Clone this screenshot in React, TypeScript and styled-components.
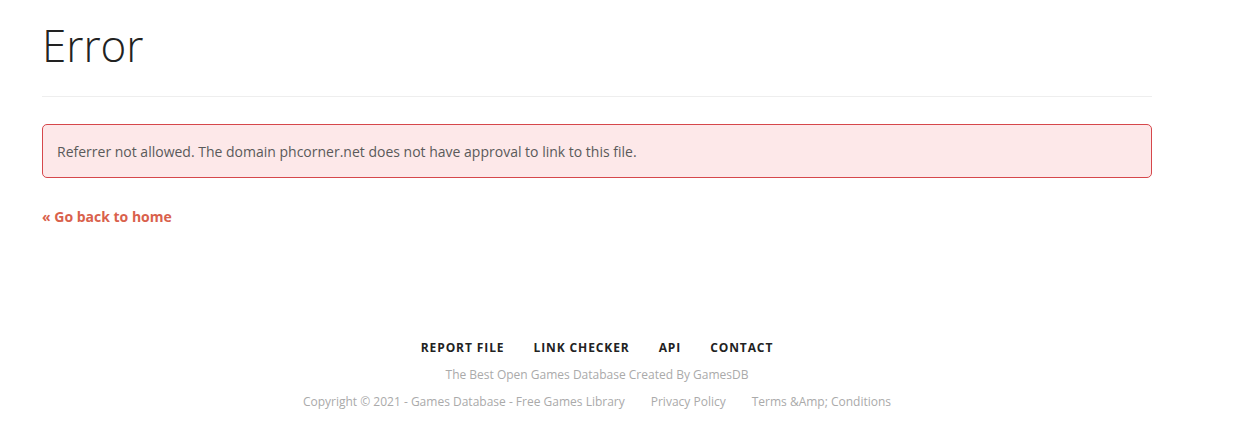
import styled, { createGlobalStyle } from "styled-components";

const Global = createGlobalStyle`
    body {
        margin: 0;
        background: #ffffff;
        font-family: 'Open Sans', 'Liberation Sans', sans-serif;
    }
`

const Page = styled.div`
    width: 1110px;
    padding: 0 42px;
`

const Title = styled.h1`
    margin: 0;
    padding-top: 17px;
    font-weight: 300;
    font-size: 44px;
    line-height: 56px;
    color: #222;
`

const Divider = styled.hr`
    margin: 23px 0 27px;
    border: 0;
    border-top: 1px solid #eeeeee;
`

const Alert = styled.div`
    box-sizing: border-box;
    height: 54px;
    display: flex;
    align-items: center;
    padding: 0 14px;
    background: #fde8e9;
    border: 1px solid #d6474b;
    border-radius: 5px;
    font-size: 14px;
    color: #5a5a5a;
`

const BackLink = styled.a`
    display: inline-block;
    margin-top: 29px;
    font-size: 14px;
    font-weight: 700;
    color: #d9614c;
    text-decoration: none;
`

const Footer = styled.footer`
    margin-top: 112px;
    display: flex;
    flex-direction: column;
    align-items: center;
`

const Nav = styled.nav`
    display: flex;
    gap: 29px;
`

const NavItem = styled.a`
    font-size: 12px;
    font-weight: 700;
    letter-spacing: 0.9px;
    color: #222;
    text-decoration: none;
    line-height: 18px;
`

const Tagline = styled.p`
    margin: 9px 0 0;
    font-size: 12px;
    line-height: 18px;
    color: #aaa;
`

const Bottom = styled.div`
    margin-top: 9px;
    display: flex;
    gap: 26px;
    font-size: 12px;
    line-height: 18px;
    color: #aaa;
`

export default function App() {
    return (
        <Page>
            <Global />
            <Title>Error</Title>
            <Divider />
            <Alert>Referrer not allowed. The domain phcorner.net does not have approval to link to this file.</Alert>
            <BackLink href="#">« Go back to home</BackLink>
            <Footer>
                <Nav>
                    <NavItem href="#">REPORT FILE</NavItem>
                    <NavItem href="#">LINK CHECKER</NavItem>
                    <NavItem href="#">API</NavItem>
                    <NavItem href="#">CONTACT</NavItem>
                </Nav>
                <Tagline>The Best Open Games Database Created By GamesDB</Tagline>
                <Bottom>
                    <span>Copyright © 2021 - Games Database - Free Games Library</span>
                    <span>Privacy Policy</span>
                    <span>Terms &amp;Amp; Conditions</span>
                </Bottom>
            </Footer>
        </Page>
    );
}
